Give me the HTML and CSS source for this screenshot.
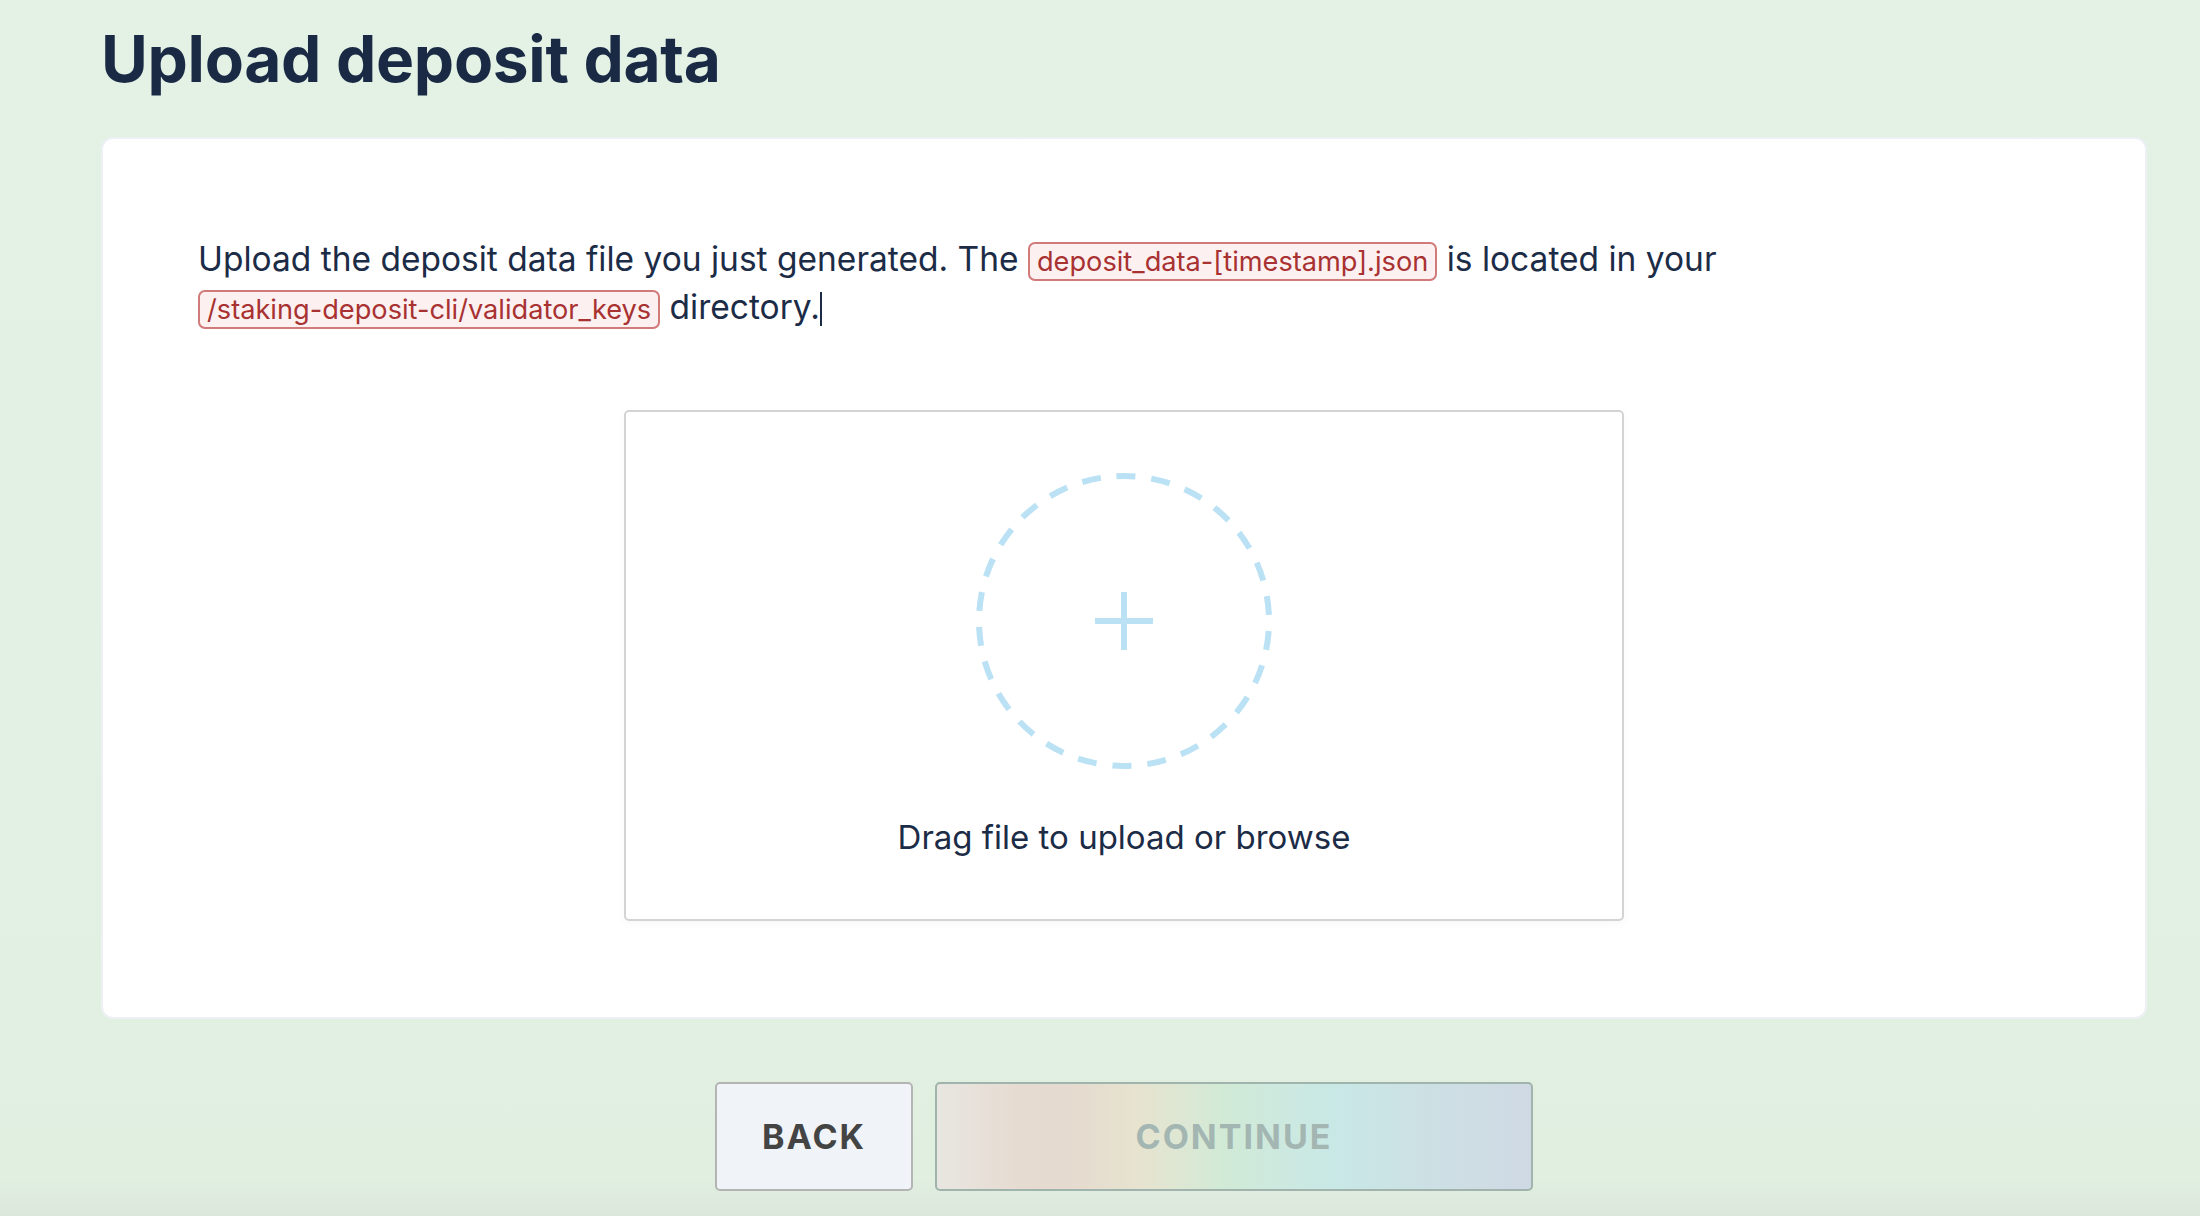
FILE: index.html
```html
<!DOCTYPE html>
<html lang="en">
<head>
<meta charset="utf-8">
<title>Upload deposit data</title>
<link rel="stylesheet" href="styles.css">
</head>
<body>
<main class="page">
  <h1 class="title">Upload deposit data</h1>
  <section class="card">
    <p class="intro">Upload the deposit data file you just generated. The <code class="pill">deposit_data-[timestamp].json</code> is located in your <code class="pill">/staking-deposit-cli/validator_keys</code> directory.<span class="caret"></span></p>
    <div class="dropzone">
      <svg class="drop-icon" width="300" height="300" viewBox="0 0 300 300" aria-hidden="true">
        <circle cx="150" cy="150" r="145" fill="none" stroke="#bbe1f4" stroke-width="6" stroke-dasharray="19 16.04" transform="rotate(-93 150 150)"/>
        <path d="M150 121 V179 M121 150 H179" stroke="#bbe1f4" stroke-width="6" fill="none"/>
      </svg>
      <p class="drop-label">Drag file to upload or browse</p>
    </div>
  </section>
  <div class="actions">
    <button class="btn btn-back" type="button">BACK</button>
    <button class="btn btn-continue" type="button" disabled>CONTINUE</button>
  </div>
</main>
</body>
</html>
```

FILE: styles.css
```css
html, body {
  margin: 0;
  padding: 0;
}

body {
  width: 2200px;
  height: 1216px;
  overflow: hidden;
  background: linear-gradient(180deg, #e4f2e6 0%, #e2f1e3 60%, #e1efe1 97%, #dae7da 100%);
  font-family: Inter, "Noto Sans", "Liberation Sans", sans-serif;
  color: #1c2c47;
}

.page {
  box-sizing: border-box;
  height: 1216px;
  padding: 19px 53px 0 101px;
  display: flex;
  flex-direction: column;
}

.title {
  margin: 0 0 38px 0;
  font-size: 64px;
  line-height: 80px;
  font-weight: 700;
  letter-spacing: -0.3px;
  color: #1a2a44;
}

.card {
  box-sizing: border-box;
  height: 882px;
  background: #ffffff;
  border: 2px solid #edf1f5;
  border-radius: 12px;
  padding: 96px 95px 0 95px;
}

.intro {
  margin: 0;
  font-size: 33.5px;
  line-height: 48px;
  font-weight: 400;
  color: #1c2c47;
}

.pill {
  font-family: Inter, "Noto Sans", "Liberation Sans", sans-serif;
  font-size: 27.2px;
  line-height: 1;
  white-space: nowrap;
  color: #a83232;
  background: #fdf0f0;
  border: 2px solid #d07a7a;
  border-radius: 7px;
  padding: 1px 7px;
}

.caret {
  display: inline-block;
  width: 2px;
  height: 34px;
  background: #1c2c47;
  vertical-align: -7px;
}

.dropzone {
  box-sizing: border-box;
  width: 1000px;
  height: 511px;
  margin: 79px auto 0 auto;
  border: 2px solid #d4d4d4;
  border-radius: 5px;
  box-shadow: 0 3px 10px rgba(0, 0, 0, 0.03);
  padding-top: 59px;
  display: flex;
  flex-direction: column;
  align-items: center;
}

.drop-icon {
  display: block;
}

.drop-label {
  margin: 46px 0 0 0;
  font-size: 33px;
  line-height: 40px;
  color: #1c2c47;
}

.actions {
  margin-top: 63px;
  display: flex;
  justify-content: center;
  gap: 22px;
}

.btn {
  box-sizing: border-box;
  height: 109px;
  border-radius: 5px;
  font-family: Inter, "Noto Sans", "Liberation Sans", sans-serif;
  font-size: 34px;
  font-weight: 700;
  letter-spacing: 2px;
  padding: 0;
}

.btn-back {
  width: 198px;
  background: #f0f4f9;
  border: 2px solid #b4b4b4;
  color: #444444;
}

.btn-continue {
  width: 598px;
  border: 2px solid #a0b4ad;
  color: #a3b6b2;
  background: linear-gradient(90deg, #e8e6e1 0%, #e6dbd1 14%, #e5dacf 22%, #e6e3cf 34%, #dde7d3 41%, #d1ead6 48%, #cde9df 58%, #c8e8e6 67%, #cbe2e4 78%, #cedde4 90%, #cfd9e3 100%);
}
```
